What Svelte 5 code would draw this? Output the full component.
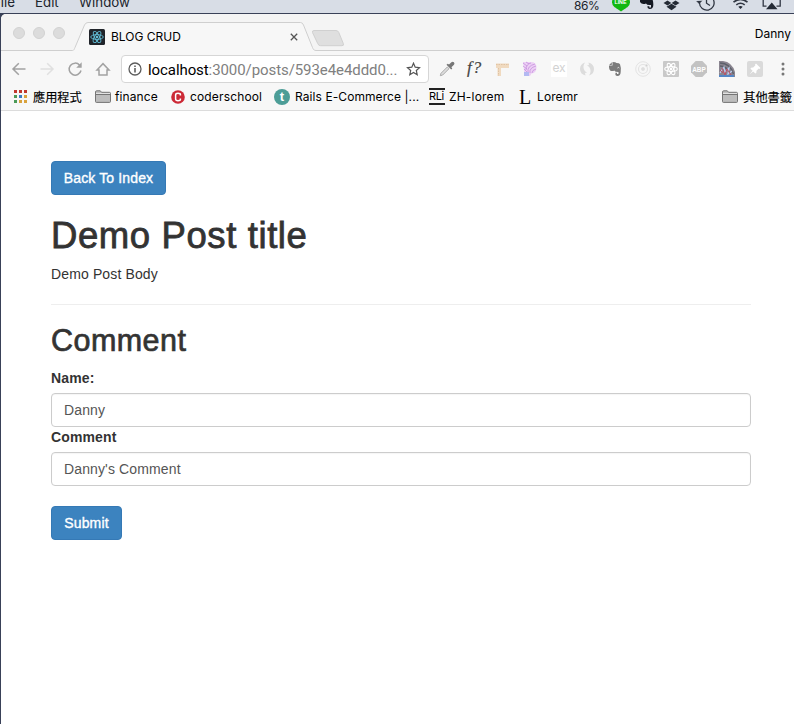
<script>
  let name = $state('Danny');
  let comment = $state("Danny's Comment");
  const dots = ['#c0392f', '#c0392f', '#c0392f', '#4b9a57', '#3b7cc4', '#d9a23c', '#4b9a57', '#d9a23c', '#d9a23c'];
</script>

{#snippet folder()}
  <svg class="folder" width="16" height="13" viewBox="0 0 16 13">
    <path d="M.5 11.5V2Q.5.8 1.7.8H5.3L6.6 2.3H14.4Q15.5 2.3 15.5 3.4V11.5Q15.5 12.4 14.6 12.4H1.4Q.5 12.4.5 11.5Z" fill="#bdbdbd" stroke="#757575" />
    <path d="M1 4.5H15" stroke="#757575" />
    <path d="M1 3.5H15" stroke="#e2e2e2" />
  </svg>
{/snippet}

{#snippet atom(w)}
  <g fill="none" stroke="currentColor" stroke-width={w}>
    <ellipse cx="8" cy="8" rx="6.300" ry="2.400" />
    <ellipse cx="8" cy="8" rx="6.300" ry="2.400" transform="rotate(60 8 8)" />
    <ellipse cx="8" cy="8" rx="6.300" ry="2.400" transform="rotate(120 8 8)" />
  </g>
  <circle cx="8" cy="8" r="1.300" fill="currentColor" />
{/snippet}

<div class="desktop">
  <header class="menubar">
    <span class="m file">File</span><span class="m edit">Edit</span><span class="m win">Window</span>
    <span class="pct">86%</span>
    <svg class="status" width="194" height="14" viewBox="600 0 194 14">
      <ellipse cx="621" cy="2.200" rx="9" ry="7.200" fill="#12b812" /><path d="M616 8L621 11.500L626 8Z" fill="#12b812" />
      <text x="614.400" y="3.600" font-size="5.300" font-weight="700" fill="#fff" font-family="Liberation Sans, sans-serif">LINE</text>
      <path d="M640 -2H652Q654 3 653 7Q652 9.300 649.500 9Q647 8.500 647.500 6.200H649.300V7.500H651V5Q647 5.500 646 3.500Q642 5 640 2Z" fill="#151923" />
      <g fill="#242a35"><path d="M663.500 3L667.500.4L671.300 3L667.500 5.600Z" /><path d="M671.700 3L675.500.4L679.500 3L675.500 5.600Z" /><path d="M666.500 6.700L671.500 3.800L676.500 6.700L671.500 10.200Z" /></g>
      <g fill="none" stroke="#303642" stroke-width="1.300"><path d="M699.500 3A7.300 7.300 0 1 0 713.500 0M706.500 -2V3.200L710 5.500" /><path d="M696.500 1L699.200 3.700L702 .7" fill="#303642" stroke-width=".5" /><path d="M733.500 2.200Q740.500 -3.500 747.500 2.200M736.300 4.900Q740.500 1.600 744.700 4.900" stroke-width="1.600" /><path d="M766.500 6.200H763.200V-1M776.500 6.200H780.200V-1" /></g>
      <path d="M738.300 6.800Q740.500 5.200 742.700 6.800L740.500 9Z M766 9.200L771.800 2.500L777.500 9.200Z" fill="#242a35" />
    </svg>
  </header>

  <section class="window">
    <div class="tabs">
      <svg class="tabshape" width="793" height="37" viewBox="1 14 793 37">
        <path d="M1 50.500H72.500C74 50.500 74.300 49 75 47.500L84.500 25Q85.600 22.500 88 22.500H300.500Q302.500 22.500 303.500 25L312.500 47.500C313.300 49.500 314 50.500 316 50.500H794V52H1Z" fill="#f7f7f7" />
        <path d="M1 50.500H72.500C74 50.500 74.300 49 75 47.500L84.500 25Q85.600 22.500 88 22.500H300.500Q302.500 22.500 303.500 25L312.500 47.500C313.300 49.500 314 50.500 316 50.500H794" fill="none" stroke="#cfcfcf" />
        <path d="M314 30.500H336Q338 30.500 338.800 32.500L343.300 43.500Q344.200 45.700 342 45.700H320.500Q318.500 45.700 317.700 43.500L312.500 32.500Q312 30.500 314 30.500Z" fill="#dfdfdf" stroke="#d0d0d0" />
      </svg>
      <div class="lights"><i></i><i></i><i></i></div>
      <svg class="fav" width="16" height="16" viewBox="0 0 16 16"><rect width="16" height="16" rx="1.500" fill="#20242a" /><g color="#62bdd6">{@render atom(0.9)}</g></svg>
      <span class="title">BLOG CRUD</span>
      <svg class="close" width="8" height="8" viewBox="0 0 8 8"><path d="M.8.8L7.200 7.200M7.200.8L.8 7.200" stroke="#555" stroke-width="1.300" /></svg>
      <span class="user">Danny</span>
    </div>

    <div class="toolbar">
      <svg class="nav" width="120" height="36" viewBox="1 51 120 36" fill="none" stroke="#a2a2a2" stroke-width="1.500">
        <path d="M25.500 69H13M18.800 63.200L13 69L18.800 74.800" />
        <path d="M40.500 69H52.500M47.200 63.200L53 69L47.200 74.800" stroke="#e0e0e0" />
        <path d="M79.700 65.200A6 6 0 1 0 81 70.500" /><path d="M81.700 62.200V67.700H76.200Z" fill="#a2a2a2" stroke="none" />
        <path d="M97 70L103 63.700L109 70H107V75H99V70Z" />
      </svg>
      <div class="omnibox">
        <svg width="14" height="14" viewBox="0 0 14 14"><circle cx="7" cy="7" r="6" fill="none" stroke="#5c5c5c" stroke-width="1.300" /><path d="M7 6V10.500M7 3.400V5" stroke="#555" stroke-width="1.500" /></svg>
        <span class="url"><b>localhost</b>:3000/posts/593e4e4ddd0...</span>
        <svg class="star" width="15" height="14" viewBox="0 0 15 14"><path d="M7.500 1.200L9.200 5.200L13.500 5.600L10.300 8.500L11.200 12.700L7.500 10.500L3.800 12.700L4.700 8.500L1.500 5.600L5.800 5.200Z" fill="none" stroke="#555" stroke-width="1.200" /></svg>
      </div>
      <div class="exts">
        <svg viewBox="0 0 16 16"><path d="M1.300 14.700L2 12.300L8.300 6L10 7.700L3.700 14Z" fill="#ddd" stroke="#aaa" /><path d="M7.500 3.800L12.200 8.500L13.300 7.400L12.400 6.200L15 3.700Q16 2.300 14.900 1.200Q13.700.2 12.400 1.200L10 3.600L8.700 2.700Z" fill="#777" /></svg>
        <span class="fq">f?</span>
        <svg viewBox="0 0 16 16"><path d="M1 2.500H14V7H6V15H2.500V7H1Z" fill="#f0dac0" /><path d="M1 3.500H14M3.500 7V15" stroke="#e0c3a3" stroke-dasharray="1.500 1" /></svg>
        <svg viewBox="0 0 16 16"><path d="M0 1H8Q13.500 1 13.500 6.500Q13.500 12 8.500 12.500L7 15H1V10Z" fill="#ecd0f4" /><g fill="none" stroke="#c690de" stroke-width=".8"><path d="M0 2L4 5M0 5L4 8M1 8L4 11M3 1L6 3" /><path d="M3 9Q3 3 8 2M5 11Q4 5 12 3M7 12Q6 7 13 5M9 12Q9 9 13 8" /></g><path d="M1 11H6V15H1Z" fill="#b3b9f2" /></svg>
        <svg viewBox="0 0 16 16"><rect width="16" height="16" fill="#fff" /><text x="1.500" y="11" font-size="12" fill="#d2d2d2" font-family="Inter, sans-serif" textLength="13">ex</text></svg>
        <svg viewBox="0 0 16 16" fill="none"><path d="M6.500 14.500Q1 13 1 8Q1 3 6 1.500Q3.500 5 5 8.500Q5.500 10.500 8 11.500L6 12Z" fill="#dcdcdc" /><path d="M9.500 1.500Q15 3 15 8Q15 13 10 14.500Q12.500 11 11 7.500Q10.500 5.500 8 4.500L10 4Z" fill="#dcdcdc" /></svg>
        <svg viewBox="0 0 16 16"><path d="M5.500 1V4.500H2Q1.800 8.500 3.500 9.700Q6 10.500 7.200 9.500Q8 11 11.500 11V13H10V11.700H8.500Q7.800 15 10.500 15Q13.500 15 13.700 11Q14.200 6 13 3.200Q12.500 2 9.500 2Q9 1 5.500 1Z M4.800 1.300L2.200 3.900H4.800Z" fill="#7b7b7b" /><path d="M10.500 7Q11.500 5.800 12.300 7" stroke="#eee" fill="none" /></svg>
        <svg viewBox="0 0 16 16" fill="none" stroke="#e3e3e3"><circle cx="8" cy="8" r="7.300" /><circle cx="8" cy="8" r="4.500" stroke-width="1.200" /><circle cx="8" cy="8" r="1.500" fill="#dedede" /><circle cx="11.500" cy="4.500" r="1" fill="#d0d0d0" /></svg>
        <svg viewBox="0 0 16 16"><rect width="16" height="16" rx="1" fill="#c9c9c9" /><g color="#fff">{@render atom(1.1)}</g></svg>
        <svg viewBox="0 0 16 16"><path d="M4.700 0H11.300L16 4.700V11.300L11.300 16H4.700L0 11.300V4.700Z" fill="#c3c3c3" /><text x="1.200" y="10.700" font-size="7.500" font-weight="700" fill="#fff" font-family="Liberation Sans, sans-serif" textLength="13.600" lengthAdjust="spacingAndGlyphs">ABP</text></svg>
        <svg viewBox="0 0 16 16"><path d="M0 0H4Q13 1 16 11V16H0Z" fill="#8a8590" /><path d="M1 2Q11 2 14.500 13M1 5Q8 5 11 13" fill="none" stroke="#5d616b" stroke-width="1.300" /><path d="M1 12L5 6L6 11L10 7L9 13L13 10" fill="none" stroke="#b9cbed" stroke-width="1.200" /><path d="M3 7L6 14L8 8L12 14M1 9L4 12" fill="none" stroke="#bd5064" /><path d="M0 15H15" stroke="#5486c5" stroke-width="2" /></svg>
        <svg viewBox="0 0 16 16"><rect width="16" height="16" rx="2" fill="#dadada" /><path d="M9 2.500L13.500 7L12.500 8L11.700 7.600L9.500 9.800L9.300 12L8.300 12.500L6.200 10.400L2.500 13.500L5.600 9.800L3.500 7.700L4 6.700L6.200 6.500L8.400 4.300L8 3.500Z" fill="#fff" /></svg>
        <svg viewBox="0 0 16 16" fill="#777"><circle cx="8" cy="3" r="1.500" /><circle cx="8" cy="8" r="1.500" /><circle cx="8" cy="13" r="1.500" /></svg>
      </div>
    </div>

    <nav class="bookmarks">
      <a class="apps"><span class="dots">{#each dots as c}<i style="background:{c}"></i>{/each}</span><span class="cjk">應用程式</span></a>
      <a class="finance">{@render folder()}<span>finance</span></a>
      <a class="coder"><svg width="14" height="14" viewBox="0 0 14 14"><circle cx="7" cy="7" r="6.800" fill="#cc2936" /><path d="M9.400 5.600V4.500Q9.400 3.300 7 3.300Q4.600 3.300 4.600 5V9Q4.600 10.700 7 10.700Q9.400 10.700 9.400 9.500V8.400" fill="none" stroke="#fff" stroke-width="1.500" /></svg><span>coderschool</span></a>
      <a class="rails"><i class="tee">t</i><span>Rails E-Commerce |...</span></a>
      <a class="zh"><i class="rli">RLi</i><span>ZH-lorem</span></a>
      <a class="lor"><i class="ell">L</i><span>Loremr</span></a>
      <a class="other">{@render folder()}<span class="cjk">其他書籤</span></a>
    </nav>

    <main>
      <button>Back To Index</button>
      <h1>Demo Post title</h1>
      <p>Demo Post Body</p>
      <hr />
      <h2>Comment</h2>
      <form onsubmit={(e) => e.preventDefault()}>
        <label for="name">Name:</label>
        <input id="name" bind:value={name} />
        <label for="comment">Comment</label>
        <input id="comment" bind:value={comment} />
        <button class="submit">Submit</button>
      </form>
    </main>
  </section>
</div>

<style>
  :global(body) { margin: 0; overflow: hidden; }
  * { box-sizing: border-box; }
  svg { display: block; flex: none; }
  span { white-space: nowrap; }
  .desktop { width: 794px; height: 724px; background: #394158; overflow: hidden; display: flex; flex-direction: column; font-family: Inter, "Noto Sans CJK TC", sans-serif; }
  .menubar { height: 13px; flex: none; background: #d8dde6; display: flex; align-items: flex-start; color: #20242c; overflow: hidden; }
  .m { font-size: 13.300px; line-height: 16px; margin-top: -6px; flex: none; }
  .file { width: 37px; margin-left: -7px; }
  .edit { width: 44px; margin-left: 5px; }
  .win { width: 60px; }
  .pct { font-size: 12px; line-height: 14px; margin-top: -1px; margin-left: auto; width: 26px; letter-spacing: -.4px; }
  .window { margin: 1px 0 0 1px; flex: 1; background: #fff; border-top-left-radius: 5px; overflow: hidden; display: flex; flex-direction: column; }
  .tabs { height: 37px; flex: none; position: relative; background: #f4f4f4; display: flex; align-items: center; padding-bottom: 1px; }
  .tabshape { position: absolute; left: 0; top: 0; }
  .tabs > :not(.tabshape) { position: relative; }
  .lights { display: flex; gap: 8px; margin: 2px 0 0 12px; width: 76px; }
  .lights i { width: 12px; height: 12px; border-radius: 50%; background: #dcdcdc; border: 1px solid #d2d2d2; }
  .fav { margin-top: 9px; }
  .title { font-size: 12px; margin: 9px 0 0 6px; width: 179px; color: #000; }
  .close { margin-top: 10px; }
  .user { margin: 2px 3px 0 auto; font-size: 12px; color: #000; }
  .toolbar { height: 36px; flex: none; background: #f7f7f7; display: flex; align-items: center; }
  .omnibox { width: 308px; height: 28px; background: #fff; border: 1px solid #d6d6d6; border-radius: 4px; display: flex; align-items: center; padding: 0 7px 0 6px; }
  .url { font: 15px/20px Roboto, sans-serif; letter-spacing: -.08px; color: #808080; margin: 1px 0 0 6px; flex: 1; }
  .url b { font-weight: 400; color: #000; }
  .exts { display: flex; gap: 12px; margin-left: 10px; align-items: center; }
  .exts svg { width: 16px; height: 16px; }
  .fq { width: 16px; font: italic 17px/18px "Liberation Serif", serif; color: #444; letter-spacing: 1px; -webkit-text-stroke: .2px #444; margin-top: -2px; }
  .bookmarks { height: 24px; flex: none; background: #f7f7f7; border-bottom: 1px solid #dcdcdc; display: flex; align-items: center; font-size: 12px; color: #000; padding-bottom: 4px; letter-spacing: .1px; }
  .bookmarks a { display: flex; align-items: center; gap: 5px; flex: none; height: 16px; }
  .bookmarks .apps { margin-left: 13px; width: 81px; }
  .dots { display: grid; grid-template-columns: repeat(3, 3px); gap: 2px; width: 14px; }
  .dots i { width: 3px; height: 3px; }
  .bookmarks .finance { width: 76px; gap: 4px; }
  .coder { width: 103px; letter-spacing: .15px; }
  .rails { width: 155px; letter-spacing: .08px; }
  .bookmarks .zh { width: 90px; gap: 4px; letter-spacing: .2px; }
  .other { margin-left: auto; margin-right: 2px; }
  .cjk { font: 12.200px/16px "Noto Sans CJK TC", sans-serif; letter-spacing: 0; -webkit-text-stroke: .15px #000; }
  .bookmarks i { font-style: normal; }
  .tee { width: 16px; height: 16px; border-radius: 50%; background: #4c9d97; color: #fff; font: 700 13px/15px "Liberation Sans", sans-serif; text-align: center; }
  .rli { width: 16px; height: 17px; border-top: 2px solid #222; border-bottom: 2px solid #222; font: 11px/13px Inter, sans-serif; letter-spacing: -.4px; }
  .ell { width: 13px; font: 20px/16px "Liberation Serif", serif; }
  main { padding: 50px 43px 0 50px; font: 14px/20px "Liberation Sans", sans-serif; color: #333; letter-spacing: .13px; }
  button { display: block; height: 34px; width: 115px; padding: 0; border: 1px solid #3579b5; border-radius: 4px; background: #3c83bf; color: #fff; font: 14px/20px "Liberation Sans", sans-serif; letter-spacing: .13px; -webkit-text-stroke: .35px #fff; }
  h1 { font-size: 36.500px; line-height: 40px; font-weight: 400; margin: 21px 0 8px; letter-spacing: .6px; -webkit-text-stroke: .8px #333; }
  h2 { font-size: 30.500px; line-height: 33px; font-weight: 400; margin: 19px 0 11px; letter-spacing: .45px; -webkit-text-stroke: .7px #333; }
  p { margin: 0; }
  hr { border: 0; border-top: 1px solid #eee; margin: 20px 0 0; }
  label { display: block; font-weight: 700; margin-bottom: 5px; }
  input { display: block; width: 700px; height: 34px; border: 1px solid #ccc; border-radius: 4px; padding: 6px 12px; font: 14px/20px "Liberation Sans", sans-serif; letter-spacing: .13px; color: #555; background: #fff; box-shadow: inset 0 1px 1px rgba(0, 0, 0, .04); }
  .submit { width: 71px; margin-top: 20px; }
</style>
